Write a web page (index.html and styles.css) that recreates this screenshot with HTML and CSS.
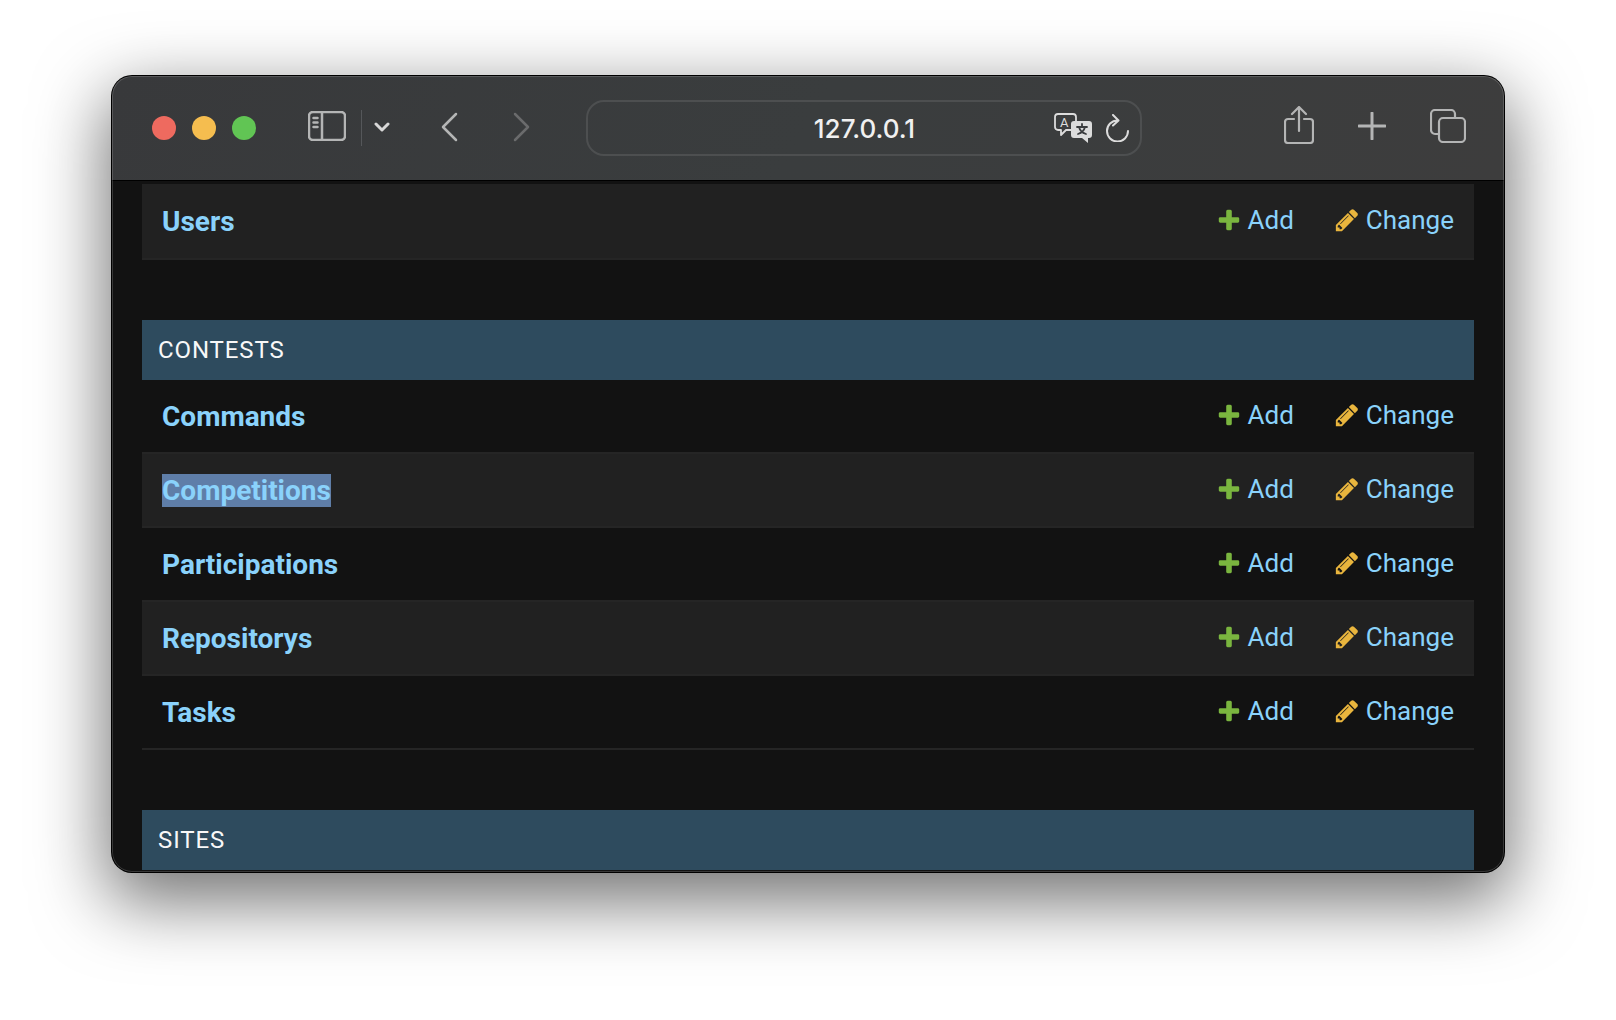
FILE: index.html
```html
<!DOCTYPE html>
<html lang="en">
<head>
  <meta charset="UTF-8">
  <title>Site administration</title>
  <link rel="stylesheet" href="styles.css">
</head>
<body>
  <svg class="defs" width="0" height="0">
    <symbol id="icon-add" viewBox="0 0 1792 1792">
      <path d="M1600 796v192q0 40-28 68t-68 28h-416v416q0 40-28 68t-68 28h-192q-40 0-68-28t-28-68v-416h-416q-40 0-68-28t-28-68v-192q0-40 28-68t68-28h416v-416q0-40 28-68t68-28h192q40 0 68 28t28 68v416h416q40 0 68 28t28 68z"/>
    </symbol>
    <symbol id="icon-change" viewBox="0 0 1792 1792">
      <path d="M491 1536l91-91-235-235-91 91v107h128v128h107zm523-928q0-22-22-22-10 0-17 7l-542 542q-7 7-7 17 0 22 22 22 10 0 17-7l542-542q7-7 7-17zm-54-192l416 416-832 832h-416v-416zm683 96q0 53-37 90l-166 166-416-416 166-165q36-38 90-38 53 0 91 38l235 234q37 39 37 91z"/>
    </symbol>
  </svg>

  <div class="window">
    <header class="toolbar">
      <div class="lights">
        <span class="light red"></span>
        <span class="light yellow"></span>
        <span class="light green"></span>
      </div>
      <svg class="tb-icon sidebar" width="38" height="30" viewBox="0 0 38 30">
        <rect x="1" y="1" width="36" height="28" rx="4"/>
        <path d="M14 1v28M5.500 7h4M5.500 11.500h4M5.500 16h4"/>
      </svg>
      <span class="tb-divider"></span>
      <svg class="tb-icon chevron" width="16" height="10" viewBox="0 0 16 10">
        <path d="M2 2l6 6 6-6"/>
      </svg>
      <svg class="tb-icon back" width="17" height="30" viewBox="0 0 17 30">
        <path d="M15 2L2 15l13 13"/>
      </svg>
      <svg class="tb-icon forward" width="17" height="30" viewBox="0 0 17 30">
        <path d="M2 2l13 13L2 28"/>
      </svg>

      <div class="urlbar">
        <span></span>
        <span class="url">127.0.0.1</span>
        <div class="url-icons">
          <svg class="tb-icon translate" width="38" height="30" viewBox="0 0 38 30">
            <path class="thin" d="M4 1h15a3 3 0 0 1 3 3v10a3 3 0 0 1-3 3h-7l-5 5v-5H4a3 3 0 0 1-3-3V4a3 3 0 0 1 3-3z"/>
            <text class="glyph-a" x="6" y="14">A</text>
            <path class="solid" d="M20 8h15a3 3 0 0 1 3 3v11a3 3 0 0 1-3 3h-1v5l-6-5h-8a3 3 0 0 1-3-3V11a3 3 0 0 1 3-3z"/>
            <path class="cut" d="M23 14h10M28 11v3M25 14c1 4 4 6 7 7M31 14c-1 4-4 6-7 7"/>
          </svg>
          <svg class="tb-icon reload" width="24" height="28" viewBox="0 0 24 28">
            <path d="M12.500 6.500a10.500 10.500 0 1 0 10.500 10.500M8 1l5.500 5.500L8 11.500"/>
          </svg>
        </div>
      </div>

      <svg class="tb-icon share" width="30" height="38" viewBox="0 0 30 38">
        <path d="M10 13H4a3 3 0 0 0-3 3v18a3 3 0 0 0 3 3h22a3 3 0 0 0 3-3V16a3 3 0 0 0-3-3h-6M15 25V2M8 8l7-7 7 7"/>
      </svg>
      <svg class="tb-icon plus" width="28" height="28" viewBox="0 0 28 28">
        <path d="M14 1v26M1 14h26"/>
      </svg>
      <svg class="tb-icon tabs" width="36" height="34" viewBox="0 0 36 34">
        <rect x="9" y="9" width="26" height="24" rx="4"/>
        <path d="M9 25H5a4 4 0 0 1-4-4V5a4 4 0 0 1 4-4h16a4 4 0 0 1 4 4v4"/>
      </svg>
    </header>

    <main class="content">
      <section class="module">
        <div class="row alt first">
          <a class="name">Users</a>
          <div class="actions">
            <a class="action"><svg class="ico add"><use href="#icon-add"/></svg>Add</a>
            <a class="action"><svg class="ico change"><use href="#icon-change"/></svg>Change</a>
          </div>
        </div>
      </section>

      <section class="module">
        <h2 class="caption">CONTESTS</h2>
        <div class="row">
          <a class="name">Commands</a>
          <div class="actions">
            <a class="action"><svg class="ico add"><use href="#icon-add"/></svg>Add</a>
            <a class="action"><svg class="ico change"><use href="#icon-change"/></svg>Change</a>
          </div>
        </div>
        <div class="row alt">
          <a class="name selected">Competitions</a>
          <div class="actions">
            <a class="action"><svg class="ico add"><use href="#icon-add"/></svg>Add</a>
            <a class="action"><svg class="ico change"><use href="#icon-change"/></svg>Change</a>
          </div>
        </div>
        <div class="row">
          <a class="name">Participations</a>
          <div class="actions">
            <a class="action"><svg class="ico add"><use href="#icon-add"/></svg>Add</a>
            <a class="action"><svg class="ico change"><use href="#icon-change"/></svg>Change</a>
          </div>
        </div>
        <div class="row alt">
          <a class="name">Repositorys</a>
          <div class="actions">
            <a class="action"><svg class="ico add"><use href="#icon-add"/></svg>Add</a>
            <a class="action"><svg class="ico change"><use href="#icon-change"/></svg>Change</a>
          </div>
        </div>
        <div class="row">
          <a class="name">Tasks</a>
          <div class="actions">
            <a class="action"><svg class="ico add"><use href="#icon-add"/></svg>Add</a>
            <a class="action"><svg class="ico change"><use href="#icon-change"/></svg>Change</a>
          </div>
        </div>
      </section>

      <section class="module">
        <h2 class="caption">SITES</h2>
      </section>
    </main>
  </div>
</body>
</html>
```

FILE: styles.css
```css
html, body {
  margin: 0;
  height: 100%;
  overflow: hidden;
}
body {
  background: #fff;
  font-family: Roboto, "Liberation Sans", sans-serif;
  padding: 76px 0 0 112px;
  box-sizing: border-box;
}
.defs {
  display: block;
  height: 0;
}

.window {
  position: relative;
  width: 1392px;
  height: 796px;
  display: flex;
  flex-direction: column;
  border-radius: 20px;
  overflow: hidden;
  background: #121212;
  box-shadow: 0 0 0 1px #000, 0 24px 70px 6px rgba(0,0,0,0.55);
}
/* thin light rim over the window edge */
.window::after {
  content: "";
  position: absolute;
  inset: 0;
  border-radius: 20px;
  box-shadow: inset 0 0 0 1px rgba(255,255,255,0.16);
  pointer-events: none;
}

/* toolbar */
.toolbar {
  flex: none;
  height: 105px;
  box-sizing: border-box;
  display: flex;
  align-items: center;
  padding: 0 0 1px 40px;
  background: linear-gradient(120deg, #38393b, #3a3d3e 50%, #3d3d3d);
  border-bottom: 1px solid #000;
}
.lights {
  display: flex;
  gap: 16px;
}
.light {
  width: 24px;
  height: 24px;
  border-radius: 50%;
}
.red { background: #ee6a5f; }
.yellow { background: #f5bd4f; }
.green { background: #61c554; }

.tb-icon {
  flex: none;
  fill: none;
  stroke: #b4b5b5;
  stroke-width: 2.500;
  stroke-linecap: round;
  stroke-linejoin: round;
}
.sidebar {
  margin: 0 0 3px 52px;
}
.tb-divider {
  width: 1px;
  height: 36px;
  margin-left: 15px;
  background: #55575a;
}
.chevron {
  margin: 0 0 1px 12px;
  stroke: #d8d8d8;
  stroke-width: 3;
}
.back { margin: 0 0 2px 51px; }
.forward {
  margin: 0 0 2px 55px;
  stroke: #6a6b6c;
}
.urlbar {
  flex: none;
  width: 556px;
  height: 56px;
  margin-left: 56px;
  box-sizing: border-box;
  display: grid;
  grid-template-columns: 1fr auto 1fr;
  align-items: center;
  border: 2px solid #4d4f50;
  border-radius: 18px;
}
.url {
  padding: 2px 0 0 1px;
  font-family: Inter, "Noto Sans", sans-serif;
  font-size: 26px;
  font-weight: 500;
  color: #f0f0f0;
}
.url-icons {
  display: flex;
  align-items: center;
  justify-content: flex-end;
  gap: 13px;
  padding-right: 11px;
}
.translate {
  margin-top: 1px;
  stroke: #dcdcdc;
}
.translate .thin { stroke-width: 1.800; }
.translate .solid {
  fill: #dcdcdc;
  stroke: none;
}
.translate .cut {
  stroke: #3a3c3e;
  stroke-width: 1.800;
}
.glyph-a {
  font-family: Roboto, sans-serif;
  font-size: 13px;
  fill: #dcdcdc;
  stroke: none;
}
.reload { stroke: #dcdcdc; stroke-width: 2; }
.share {
  margin: 0 0 6px 142px;
  stroke-width: 2.200;
}
.plus {
  margin: 0 0 3px 44px;
  stroke-width: 3;
}
.tabs {
  margin: 0 0 3px 44px;
  stroke-width: 2.200;
}

/* admin tables */
.content {
  flex: 1;
  min-height: 0;
  padding: 3px 30px 0;
  display: flex;
  flex-direction: column;
  gap: 60px;
}
.caption {
  margin: 0;
  height: 60px;
  display: flex;
  align-items: center;
  padding-left: 16px;
  background: #2e4b5e;
  color: #f8f8f8;
  font-size: 24px;
  font-weight: 400;
  letter-spacing: 0.900px;
}
.row {
  height: 74px;
  box-sizing: border-box;
  display: flex;
  align-items: center;
  justify-content: space-between;
  padding: 0 20px;
  border-bottom: 2px solid #252525;
}
.row.first { height: 76px; }
.row.first .actions { padding-bottom: 2px; }
.alt { background: #212121; }
.name {
  color: #8ad2fb;
  font-size: 28px;
  font-weight: 700;
}
.selected { background: #5f7ea8; }
.actions {
  display: flex;
  gap: 40px;
  padding-bottom: 3px;
}
.action {
  display: flex;
  align-items: center;
  gap: 6px;
  color: #8ad2fb;
  font-size: 26px;
}
.ico {
  width: 26px;
  height: 26px;
}
.add { fill: #7ab53f; }
.change { fill: #e9b53d; }
```
